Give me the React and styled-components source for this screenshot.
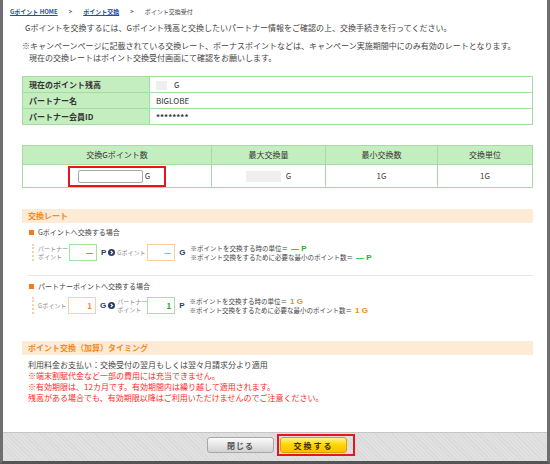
import styled, { createGlobalStyle } from 'styled-components';

const GlobalStyle = createGlobalStyle`
  html, body {
    margin: 0;
    padding: 0;
    background: #fff;
  }
  body {
    font-family: 'Noto Sans CJK JP', 'Liberation Sans', sans-serif;
    color: #333;
  }
`;

const Frame = styled.div`
  width: 550px;
  height: 464px;
  box-sizing: border-box;
  border-left: 3px solid #6e6e6e;
  border-right: 3px solid #6e6e6e;
  border-bottom: 3px solid #555;
  background: #fff;
  display: flex;
  flex-direction: column;
  overflow: hidden;
`;

const Breadcrumb = styled.div`
  padding: 6px 0 0 7px;
  font-size: 6px;
  line-height: 12px;
  color: #444;
  display: flex;
  align-items: center;

  a {
    color: #1f4fa3;
    font-weight: bold;
    text-decoration: underline;
  }
`;

const Sep = styled.span`
  margin: 0 11px;
  color: #555;
  font-weight: bold;
`;

const Main = styled.div`
  padding: 0 14px 0 19px;
  display: flex;
  flex-direction: column;
`;

const Intro = styled.p`
  margin: 4px 0 0;
  padding-left: 3px;
  font-size: 8px;
  line-height: 12px;
  color: #444;
  white-space: nowrap;
`;

const Notes = styled.div`
  margin-top: 6px;
  font-size: 8px;
  line-height: 12px;
  color: #444;
  white-space: nowrap;
`;

const Indent = styled.div`
  padding-left: 7px;
`;

const InfoTable = styled.table`
  margin-top: 12px;
  width: 100%;
  border-collapse: collapse;
  font-size: 8px;

  td {
    border: 1px solid #a6dba2;
    height: 15px;
    padding: 0 6px;
    line-height: 12px;
    color: #333;
  }
`;

const LabelCell = styled.td`
  width: 114px;
  background: #c5eec0;
  font-weight: bold;
`;

const Masked = styled.span`
  display: inline-block;
  width: ${p => p.$w}px;
  height: ${p => p.$h}px;
  background: #efefef;
  vertical-align: middle;
  margin-right: ${p => p.$gap}px;
`;

const ExTable = styled.table`
  margin-top: 20px;
  width: 100%;
  border-collapse: collapse;
  font-size: 8px;
  table-layout: fixed;

  th {
    border: 1px solid #a6dba2;
    background: #c5eec0;
    height: 18px;
    padding: 0;
    line-height: 12px;
    font-weight: normal;
    color: #333;
  }
  td {
    border: 1px solid #a6dba2;
    height: 22px;
    padding: 0;
    line-height: 12px;
    text-align: center;
    color: #444;
  }
`;

const RedFrame = styled.span`
  display: inline-flex;
  align-items: center;
  border: 2px solid #e8141e;
  padding: ${p => p.$pad};
`;

const AmountInput = styled.input`
  width: 63px;
  height: 11px;
  border: 1px solid #a9a9a9;
  border-radius: 2px;
  padding: 0;
  margin: 0 2px 0 0;
  font-size: 8px;
`;

const SectionHead = styled.div`
  margin-top: ${p => p.$mt}px;
  height: 14px;
  line-height: 14px;
  background: #fdebd6;
  color: #f08a24;
  font-weight: bold;
  font-size: 8px;
  padding-left: 6px;
`;

const SubHead = styled.div`
  margin-top: ${p => p.$mt}px;
  padding-left: 7px;
  font-size: 7px;
  line-height: 12px;
  color: #444;
  display: flex;
  align-items: center;

  &::before {
    content: '';
    width: 5px;
    height: 5px;
    background: #f47a20;
    margin-right: 4px;
  }
`;

const RateRow = styled.div`
  margin: ${p => p.$mt}px 0 0 10px;
  border-left: 2px dotted #f9cfa6;
  padding-left: 4px;
  height: 17px;
  display: flex;
  align-items: center;
`;

const SmallLabel = styled.div`
  width: ${p => p.$w}px;
  font-size: 6px;
  line-height: 8px;
  color: #8a8a8a;
  white-space: nowrap;
`;

const ValueBox = styled.div`
  width: 28px;
  height: 17px;
  box-sizing: border-box;
  border: 1px solid ${p => (p.$tone === 'green' ? '#a8e0a4' : '#fbcfa6')};
  color: ${p => (p.$tone === 'green' ? '#25a825' : '#f08a24')};
  text-align: right;
  padding-right: 3px;
  font-weight: bold;
  font-size: 8px;
  line-height: 15px;
`;

const Unit = styled.span`
  margin: 0 2px 0 4px;
  font-family: 'Liberation Sans', sans-serif;
  font-weight: bold;
  font-size: 8px;
  color: #2b3a67;
`;

const RateNotes = styled.div`
  margin-left: 3px;
  font-size: 6.5px;
  line-height: 9px;
  color: #444;
  white-space: nowrap;
`;

const Em = styled.b`
  margin-left: 3px;
  font-size: 8px;
  color: ${p => (p.$tone === 'green' ? '#25b025' : '#f28a20')};
  font-family: 'Liberation Sans', sans-serif;
`;

const Divider = styled.div`
  margin: 14px 0 0 6px;
  border-top: 1px solid #e8e8e8;
`;

const Timing = styled.div`
  margin-top: 4px;
  padding-left: 6px;
  font-size: 8px;
  line-height: 11px;
  white-space: nowrap;
  color: #444;
`;

const Red = styled.div`
  color: #ff1f1f;
`;

const Footer = styled.div`
  margin-top: auto;
  height: 27px;
  border-top: 1px solid #c6c6c6;
  background: repeating-linear-gradient(45deg, #d9d9d9 0 1px, #e1e1e1 1px 3px);
  display: flex;
  justify-content: center;
  align-items: flex-start;
  padding: 1px 0 0 12px;
  box-sizing: content-box;
`;

const Button = styled.button`
  width: 67px;
  height: 16px;
  margin: ${p => (p.$primary ? '0' : '3px 0 0')};
  border-radius: 3px;
  border: 1px solid ${p => (p.$primary ? '#d6a200' : '#a8a8a8')};
  background: ${p =>
    p.$primary
      ? 'linear-gradient(#fff48a, #ffd400 50%, #ffbf00)'
      : 'linear-gradient(#fbfbfb, #e6e6e6 50%, #d2d2d2)'};
  font-family: 'Noto Sans CJK JP', sans-serif;
  font-size: 8px;
  font-weight: bold;
  letter-spacing: ${p => (p.$primary ? '2px' : '1px')};
  color: ${p => (p.$primary ? '#3a3000' : '#555')};
  padding: 0;
  cursor: pointer;
`;

const ArrowIcon = () => (
  <svg width="7" height="7" viewBox="0 0 10 10">
    <circle cx="5" cy="5" r="5" fill="#2b3a67" />
    <path d="M4 2.6 L6.4 5 L4 7.4" stroke="#fff" strokeWidth="1.7" fill="none" />
  </svg>
);

function App() {
  return (
    <>
      <GlobalStyle />
      <Frame>
        <Breadcrumb>
          <a>Gポイント HOME</a>
          <Sep>&gt;</Sep>
          <a>ポイント交換</a>
          <Sep>&gt;</Sep>
          <span>ポイント交換受付</span>
        </Breadcrumb>

        <Main>
          <Intro>
            Gポイントを交換するには、Gポイント残高と交換したいパートナー情報をご確認の上、交換手続きを行ってください。
          </Intro>
          <Notes>
            <div>
              ※キャンペーンページに記載されている交換レート、ボーナスポイントなどは、キャンペーン実施期間中にのみ有効のレートとなります。
            </div>
            <Indent>現在の交換レートはポイント交換受付画面にて確認をお願いします。</Indent>
          </Notes>

          <InfoTable>
            <tbody>
              <tr>
                <LabelCell>現在のポイント残高</LabelCell>
                <td>
                  <Masked $w={11} $h={9} $gap={7} />G
                </td>
              </tr>
              <tr>
                <LabelCell>パートナー名</LabelCell>
                <td>BIGLOBE</td>
              </tr>
              <tr>
                <LabelCell>パートナー会員ID</LabelCell>
                <td><b>********</b></td>
              </tr>
            </tbody>
          </InfoTable>

          <ExTable>
            <colgroup>
              <col style={{ width: 189 }} />
              <col style={{ width: 114 }} />
              <col style={{ width: 112 }} />
              <col />
            </colgroup>
            <thead>
              <tr>
                <th>交換Gポイント数</th>
                <th>最大交換量</th>
                <th>最小交換数</th>
                <th>交換単位</th>
              </tr>
            </thead>
            <tbody>
              <tr>
                <td>
                  <RedFrame $pad="2px 14px 2px 8px">
                    <AmountInput type="text" />G
                  </RedFrame>
                </td>
                <td>
                  <Masked $w={35} $h={11} $gap={5} />G
                </td>
                <td>1G</td>
                <td>1G</td>
              </tr>
            </tbody>
          </ExTable>

          <SectionHead $mt={21}>交換レート</SectionHead>

          <SubHead $mt={3}>Gポイントへ交換する場合</SubHead>
          <RateRow $mt={6}>
            <SmallLabel $w={31}>
              パートナー
              <br />
              ポイント
            </SmallLabel>
            <ValueBox $tone="green">—</ValueBox>
            <Unit>P</Unit>
            <ArrowIcon />
            <SmallLabel $w={30} style={{ marginLeft: 2 }}>Gポイント</SmallLabel>
            <ValueBox $tone="orange">—</ValueBox>
            <Unit>G</Unit>
            <RateNotes>
              <div>
                ※ポイントを交換する時の単位＝<Em $tone="green">— P</Em>
              </div>
              <div>
                ※ポイント交換をするために必要な最小のポイント数＝<Em $tone="green">— P</Em>
              </div>
            </RateNotes>
          </RateRow>

          <Divider />

          <SubHead $mt={4}>パートナーポイントへ交換する場合</SubHead>
          <RateRow $mt={5}>
            <SmallLabel $w={30}>Gポイント</SmallLabel>
            <ValueBox $tone="orange">1</ValueBox>
            <Unit>G</Unit>
            <ArrowIcon />
            <SmallLabel $w={30} style={{ marginLeft: 2 }}>
              パートナー
              <br />
              ポイント
            </SmallLabel>
            <ValueBox $tone="green">1</ValueBox>
            <Unit>P</Unit>
            <RateNotes>
              <div>
                ※ポイントを交換する時の単位＝<Em $tone="orange">1 G</Em>
              </div>
              <div>
                ※ポイント交換をするために必要な最小のポイント数＝<Em $tone="orange">1 G</Em>
              </div>
            </RateNotes>
          </RateRow>

          <SectionHead $mt={27}>ポイント交換（加算）タイミング</SectionHead>
          <Timing>
            <div>利用料金お支払い：交換受付の翌月もしくは翌々月請求分より適用</div>
            <Red>※端末割賦代金など一部の費用には充当できません。</Red>
            <Red>※有効期限は、12カ月です。有効期間内は繰り越して適用されます。</Red>
            <Red>残高がある場合でも、有効期限以降はご利用いただけませんのでご注意ください。</Red>
          </Timing>
        </Main>

        <Footer>
          <Button>閉じる</Button>
          <RedFrame $pad="1px 6px 1px 1px" style={{ marginLeft: 3 }}>
            <Button $primary>交換する</Button>
          </RedFrame>
        </Footer>
      </Frame>
    </>
  );
}

export default App;
